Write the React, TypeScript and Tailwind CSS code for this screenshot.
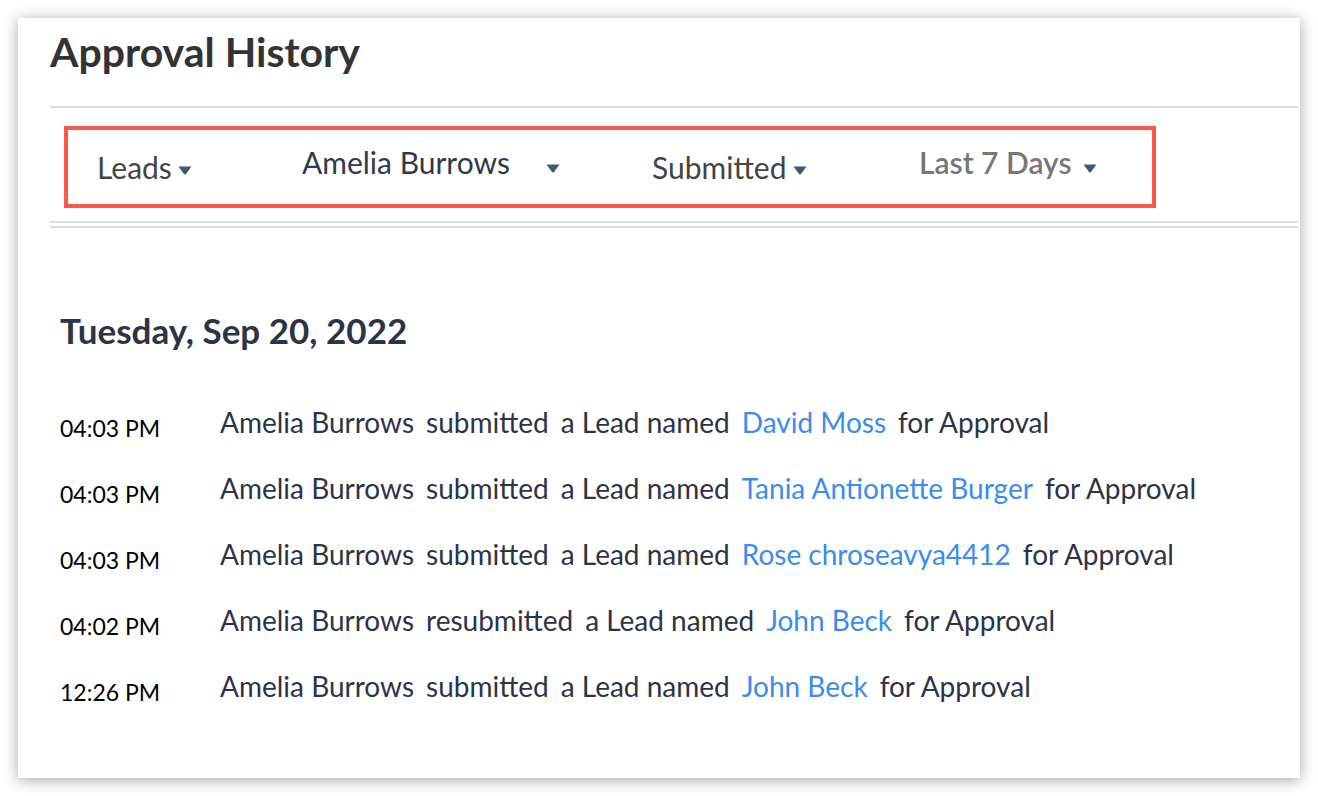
const rows = [
  { time: '04:03 PM', action: 'submitted', name: 'David Moss' },
  { time: '04:03 PM', action: 'submitted', name: 'Tania Antionette Burger' },
  { time: '04:03 PM', action: 'submitted', name: 'Rose chroseavya4412' },
  { time: '04:02 PM', action: 'resubmitted', name: 'John Beck' },
  { time: '12:26 PM', action: 'submitted', name: 'John Beck' },
]

function Caret({ className = '' }: { className?: string }) {
  return (
    <svg width="14" height="9" viewBox="0 0 14 9" className={className}>
      <path d="M0.5 0.5 H13.5 L8 8 Q7 9 6 8 Z" fill="#3d5a72" />
    </svg>
  )
}

export default function App() {
  return (
    <div className="min-h-screen bg-white pt-[18px] pl-[18px]" style={{ fontFamily: 'Lato, "Open Sans", sans-serif' }}>
      <div className="w-[1282px] h-[760px] bg-white shadow-[0_2px_14px_rgba(0,0,0,0.35)] pl-[32px] pr-[2px] pt-[13px]">
        <h1 className="text-[41px] leading-[41px] font-bold text-[#333333] h-[75px]">Approval History</h1>
        <div className="h-[2px] bg-[#dddddd]" />

        {/* filters */}
        <div className="mt-[18px] ml-[14px] w-[1092px] h-[82px] border-4 border-[#fb5a4b] flex items-start pl-[29px]">
          <div className="w-[205px] flex items-center pt-[22px]">
            <span className="text-[30px] leading-[30px] text-[#444444]">Leads</span>
            <Caret className="ml-[6px] mt-[6px]" />
          </div>
          <div className="w-[350px] flex items-center pt-[17px]">
            <span className="text-[30px] leading-[30px] text-[#2f3a4a]">Amelia Burrows</span>
            <Caret className="ml-[36px] mt-[12px]" />
          </div>
          <div className="w-[267px] flex items-center pt-[22px]">
            <span className="text-[30px] leading-[30px] text-[#444444]">Submitted</span>
            <Caret className="ml-[7px] mt-[6px]" />
          </div>
          <div className="flex items-center pt-[17px]">
            <span className="text-[30px] leading-[30px] font-semibold text-[#777777]">Last 7 Days</span>
            <Caret className="ml-[11px] mt-[12px]" />
          </div>
        </div>

        <div className="mt-[13px] h-[2px] bg-[#dddddd]" />
        <div className="mt-[3px] h-[2px] bg-[#dddddd]" />

        <div className="pl-[10px] pt-[85px]">
          <h2 className="text-[35px] leading-[35px] font-bold text-[#2d3446]">Tuesday, Sep 20, 2022</h2>
          <div className="mt-[60px] flex flex-col gap-[38px]">
            {rows.map((r, i) => (
              <div key={i} className="flex items-start h-[28px]">
                <span className="w-[160px] pt-[6px] text-[23px] leading-[28px] text-black">{r.time}</span>
                <span className="text-[28px] leading-[28px] text-[#2d3446]">
                  Amelia Burrows<span className="ml-[12px]">{r.action}</span>
                  <span className="ml-[12px]">a Lead named</span>
                  <span className="ml-[12px] text-[#3b8ced]">{r.name}</span>
                  <span className="ml-[12px]">for Approval</span>
                </span>
              </div>
            ))}
          </div>
        </div>
      </div>
    </div>
  )
}
